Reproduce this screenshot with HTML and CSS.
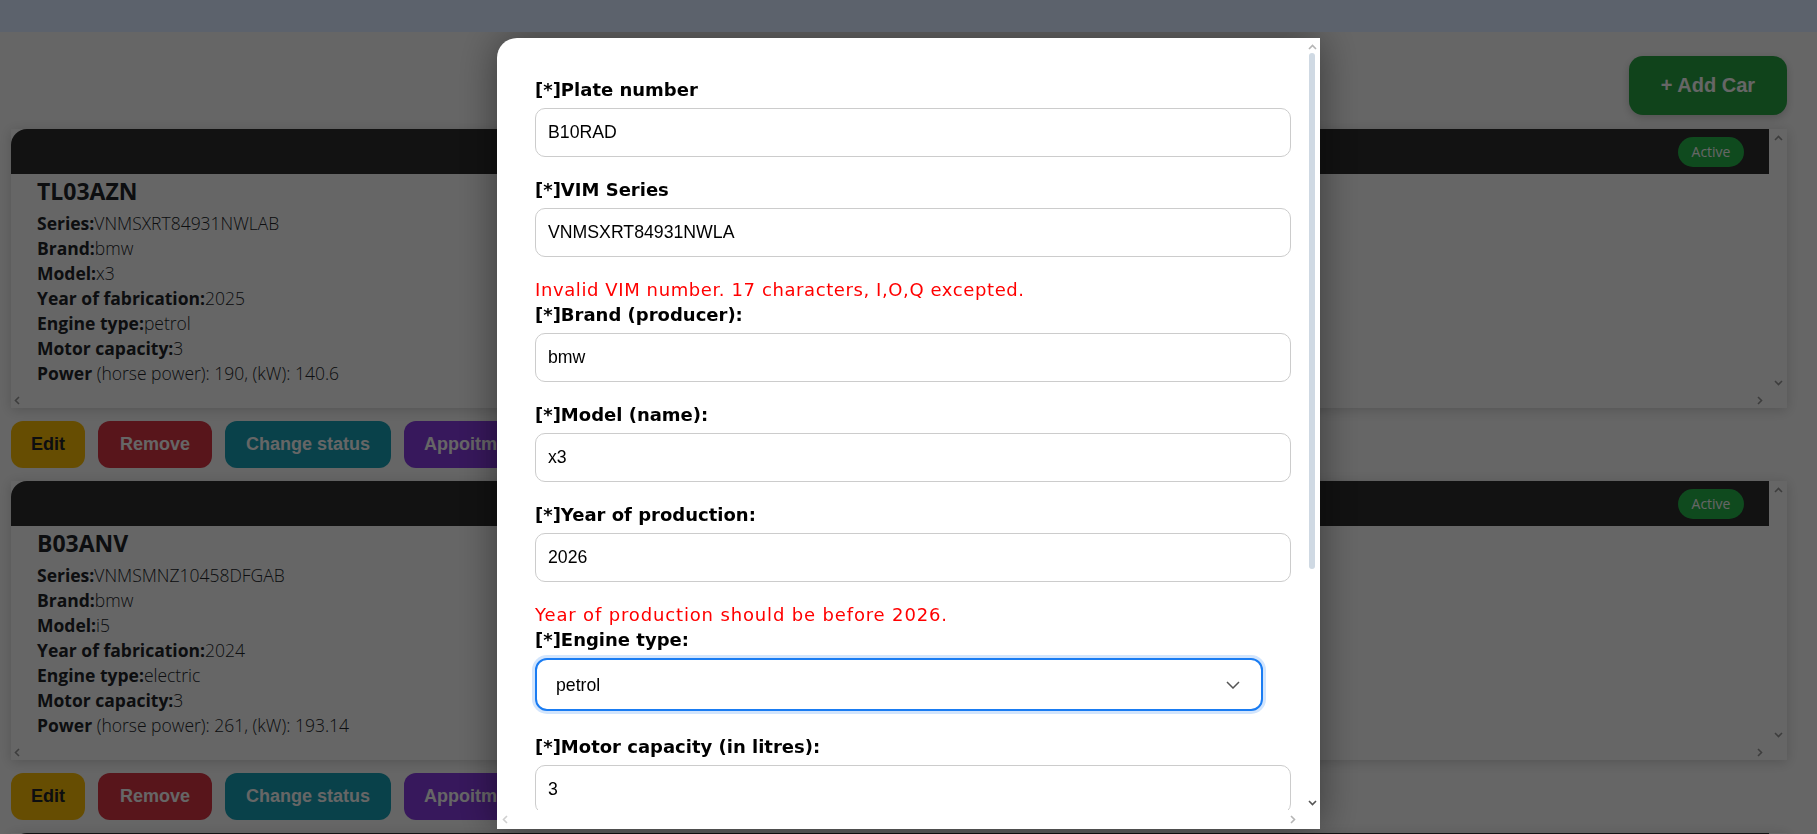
FILE: index.html
```html
<!DOCTYPE html>
<html lang="en">
<head>
<meta charset="utf-8">
<title>Cars</title>
<link rel="stylesheet" href="styles.css">
</head>
<body>
<header class="topbar"></header>
<main class="page">
  <div class="toolbar"><button class="btn-add" type="button">+ Add Car</button></div>

  <section class="car">
    <div class="car-view">
      <div class="car-head"><span class="badge">Active</span></div>
      <div class="car-body">
        <h5 class="car-title">TL03AZN</h5>
        <p class="line"><b>Series:</b>VNMSXRT84931NWLAB</p>
        <p class="line"><b>Brand:</b>bmw</p>
        <p class="line"><b>Model:</b>x3</p>
        <p class="line"><b>Year of fabrication:</b>2025</p>
        <p class="line"><b>Engine type:</b>petrol</p>
        <p class="line"><b>Motor capacity:</b>3</p>
        <p class="line"><b>Power</b> (horse power): 190, (kW): 140.6</p>
      </div>
    </div>
    <div class="car-vbar">
      <svg class="arr" width="9" height="6" viewBox="0 0 9 6"><path d="M1 5 L4.5 1.5 L8 5"/></svg>
      <svg class="arr" width="9" height="6" viewBox="0 0 9 6"><path d="M1 1 L4.5 4.5 L8 1"/></svg>
    </div>
    <div class="car-hbar">
      <svg class="arr" width="6" height="9" viewBox="0 0 6 9"><path d="M5 1 L1.5 4.5 L5 8"/></svg>
      <svg class="arr" width="6" height="9" viewBox="0 0 6 9"><path d="M1 1 L4.5 4.5 L1 8"/></svg>
    </div>
    <div class="car-corner"></div>
  </section>
  <div class="actions">
    <button class="btn btn-edit" type="button">Edit</button>
    <button class="btn btn-remove" type="button">Remove</button>
    <button class="btn btn-status" type="button">Change status</button>
    <button class="btn btn-appoint" type="button">Appoitments</button>
  </div>

  <section class="car">
    <div class="car-view">
      <div class="car-head"><span class="badge">Active</span></div>
      <div class="car-body">
        <h5 class="car-title">B03ANV</h5>
        <p class="line"><b>Series:</b>VNMSMNZ10458DFGAB</p>
        <p class="line"><b>Brand:</b>bmw</p>
        <p class="line"><b>Model:</b>i5</p>
        <p class="line"><b>Year of fabrication:</b>2024</p>
        <p class="line"><b>Engine type:</b>electric</p>
        <p class="line"><b>Motor capacity:</b>3</p>
        <p class="line"><b>Power</b> (horse power): 261, (kW): 193.14</p>
      </div>
    </div>
    <div class="car-vbar">
      <svg class="arr" width="9" height="6" viewBox="0 0 9 6"><path d="M1 5 L4.5 1.5 L8 5"/></svg>
      <svg class="arr" width="9" height="6" viewBox="0 0 9 6"><path d="M1 1 L4.5 4.5 L8 1"/></svg>
    </div>
    <div class="car-hbar">
      <svg class="arr" width="6" height="9" viewBox="0 0 6 9"><path d="M5 1 L1.5 4.5 L5 8"/></svg>
      <svg class="arr" width="6" height="9" viewBox="0 0 6 9"><path d="M1 1 L4.5 4.5 L1 8"/></svg>
    </div>
    <div class="car-corner"></div>
  </section>
  <div class="actions">
    <button class="btn btn-edit" type="button">Edit</button>
    <button class="btn btn-remove" type="button">Remove</button>
    <button class="btn btn-status" type="button">Change status</button>
    <button class="btn btn-appoint" type="button">Appoitments</button>
  </div>

  <section class="car car-next">
    <div class="car-view">
      <div class="car-head"></div>
    </div>
  </section>
</main>

<div class="backdrop">
  <div class="modal">
    <form class="modal-view">
      <label class="flabel" for="plate">[*]Plate number</label>
      <input class="finput" id="plate" type="text" value="B10RAD">

      <label class="flabel" for="vim">[*]VIM Series</label>
      <input class="finput" id="vim" type="text" value="VNMSXRT84931NWLA">
      <p class="ferror">Invalid VIM number. 17 characters, I,O,Q excepted.</p>

      <label class="flabel" for="brand">[*]Brand (producer):</label>
      <input class="finput" id="brand" type="text" value="bmw">

      <label class="flabel" for="model">[*]Model (name):</label>
      <input class="finput" id="model" type="text" value="x3">

      <label class="flabel" for="year">[*]Year of production:</label>
      <input class="finput" id="year" type="text" value="2026">
      <p class="ferror ferror-wide">Year of production should be before 2026.</p>

      <label class="flabel" for="engine">[*]Engine type:</label>
      <div class="select-wrap">
        <select class="fselect" id="engine">
          <option>petrol</option>
          <option>diesel</option>
          <option>electric</option>
        </select>
        <svg class="chev" width="14" height="8" viewBox="0 0 14 8"><path d="M1 1 L7 7 L13 1"/></svg>
      </div>

      <label class="flabel" for="cap">[*]Motor capacity (in litres):</label>
      <input class="finput" id="cap" type="text" value="3">
    </form>
    <div class="m-vbar">
      <svg class="marr light" width="9" height="6" viewBox="0 0 9 6"><path d="M1 5 L4.5 1.5 L8 5"/></svg>
      <div class="m-track"><div class="m-thumb"></div></div>
      <svg class="marr dark" width="9" height="6" viewBox="0 0 9 6"><path d="M1 1 L4.5 4.5 L8 1"/></svg>
    </div>
    <div class="m-hbar">
      <svg class="marr lighter" width="6" height="9" viewBox="0 0 6 9"><path d="M5 1 L1.5 4.5 L5 8"/></svg>
      <svg class="marr light" width="6" height="9" viewBox="0 0 6 9"><path d="M1 1 L4.5 4.5 L1 8"/></svg>
    </div>
    <div class="m-corner"></div>
  </div>
</div>
</body>
</html>
```

FILE: styles.css
```css
* { box-sizing: border-box; }

html, body { height: 100%; }

body {
  margin: 0;
  background: #ffffff;
  font-family: "Open Sans", "Noto Sans", sans-serif;
  color: #212529;
  overflow: hidden;
}

.topbar {
  height: 32px;
  background: #5c626c;
  position: relative;
  z-index: 20;
}

.page {
  padding: 0 30px 0 11px;
}

.toolbar {
  display: flex;
  justify-content: flex-end;
  padding-top: 24px;
  margin-bottom: 14px;
}

.btn-add {
  width: 158px;
  height: 59px;
  border: none;
  border-radius: 14px;
  background: #28a745;
  color: #ffffff;
  font-family: "Liberation Sans", Arial, sans-serif;
  font-weight: 700;
  font-size: 20px;
  box-shadow: 0 3px 8px rgba(0, 0, 0, 0.2);
}

/* ---------- car card ---------- */
.car {
  height: 279px;
  background: #ffffff;
  box-shadow: 0 2px 12px rgba(0, 0, 0, 0.18);
  display: grid;
  grid-template-columns: 1fr 18px;
  grid-template-rows: 1fr 16px;
  overflow: hidden;
}

.car-next {
  height: 45px;
  grid-template-rows: 1fr;
}

.car-view {
  overflow: hidden;
  min-width: 0;
}

.car-head {
  height: 45px;
  background: #2d2d2d;
  border-top-left-radius: 16px;
  display: flex;
  align-items: center;
  justify-content: flex-end;
  padding-right: 25px;
}

.badge {
  display: inline-flex;
  align-items: center;
  justify-content: center;
  width: 66px;
  height: 30px;
  border-radius: 15px;
  background: #26b94d;
  color: #ffffff;
  font-family: "Open Sans", sans-serif;
  font-size: 14px;
  font-weight: 400;
}

.car-body {
  padding: 4px 26px 0;
}

.car-title {
  margin: 0 0 7px;
  font-size: 23px;
  line-height: 26px;
  font-weight: 700;
}

.line {
  margin: 0;
  font-size: 17.5px;
  line-height: 25px;
  font-weight: 300;
  white-space: nowrap;
}

.line b { font-weight: 700; }

.car-vbar {
  display: flex;
  flex-direction: column;
  justify-content: space-between;
  align-items: center;
  padding: 6px 0 6px;
}

.car-hbar {
  display: flex;
  justify-content: space-between;
  align-items: center;
  padding: 0 6px 0 3px;
}

.arr path {
  fill: none;
  stroke: #9a9a9a;
  stroke-width: 1.6;
}

/* ---------- action buttons ---------- */
.actions {
  display: flex;
  gap: 13px;
  margin: 13px 0;
}

.btn {
  height: 47px;
  padding: 0 20px;
  border: none;
  border-radius: 12px;
  font-family: "Liberation Sans", Arial, sans-serif;
  font-weight: 700;
  font-size: 18px;
  color: #ffffff;
}

.btn-edit { background: #ffc107; color: #212529; }
.btn-remove { background: #dc3545; padding: 0 22px; }
.btn-status { background: #17a2b8; padding: 0 21px; }
.btn-appoint { background: #8a3ce6; }

/* ---------- modal ---------- */
.backdrop {
  position: fixed;
  inset: 0;
  background: rgba(0, 0, 0, 0.6);
  z-index: 10;
  display: flex;
  justify-content: center;
  align-items: flex-start;
  padding-top: 38px;
}

.modal {
  width: 823px;
  height: 791px;
  background: #ffffff;
  border-top-left-radius: 20px;
  box-shadow: 0 0 40px rgba(0, 0, 0, 0.45);
  display: grid;
  grid-template-columns: 1fr 16px;
  grid-template-rows: 1fr 19px;
  overflow: hidden;
}

.modal-view {
  overflow: hidden;
  min-width: 0;
  padding: 39px 0 0 38px;
  margin: 0;
}

.flabel {
  display: block;
  margin-bottom: 6px;
  font-family: "DejaVu Sans", sans-serif;
  font-weight: 700;
  font-size: 18px;
  line-height: 25px;
  color: #000000;
  white-space: nowrap;
}

.finput {
  display: block;
  width: 756px;
  height: 49px;
  margin: 0 0 20px;
  padding: 0 12px;
  border: 1px solid #cccccc;
  border-radius: 10px;
  background: #ffffff;
  font-family: "Liberation Sans", Arial, sans-serif;
  font-size: 17.7px;
  color: #000000;
  outline: none;
}

.ferror {
  margin: 0;
  font-family: "DejaVu Sans", sans-serif;
  font-size: 18px;
  line-height: 25px;
  letter-spacing: 0.6px;
  color: #ff0000;
  white-space: nowrap;
}

.ferror-wide { letter-spacing: 0.85px; }

.select-wrap {
  position: relative;
  width: 728px;
  margin-bottom: 23px;
}

.fselect {
  display: block;
  width: 728px;
  height: 53px;
  padding: 0 0 0 19px;
  border: 2px solid #1a7cf2;
  border-radius: 12px;
  background: #ffffff;
  box-shadow: 0 0 0 3px #d2e5fd;
  font-family: "Liberation Sans", Arial, sans-serif;
  font-size: 17.7px;
  color: #000000;
  appearance: none;
  -webkit-appearance: none;
  outline: none;
}

.chev {
  position: absolute;
  right: 23px;
  top: 23px;
  pointer-events: none;
}

.chev path {
  fill: none;
  stroke: #555555;
  stroke-width: 1.5;
}

.m-vbar {
  display: flex;
  flex-direction: column;
  align-items: center;
  padding: 6px 0 4px 0;
}

.m-track {
  flex: 1;
  width: 100%;
  display: flex;
  justify-content: center;
  padding: 3px 0 0;
}

.m-thumb {
  width: 6px;
  height: 516px;
  border-radius: 3px;
  background: #cfd9e3;
}

.m-hbar {
  display: flex;
  justify-content: space-between;
  align-items: center;
  padding: 0 8px 0 5px;
}

.marr path {
  fill: none;
  stroke-width: 1.6;
}

.marr.light path { stroke: #b5b5b5; }
.marr.lighter path { stroke: #d0d0d0; }
.marr.dark path { stroke: #555555; }
```
